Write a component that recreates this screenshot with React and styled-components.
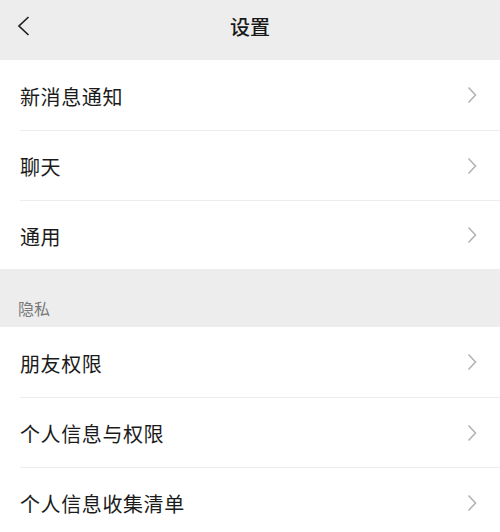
import React from "react";
import styled, { createGlobalStyle } from "styled-components";

const Global = createGlobalStyle`
  html, body { margin: 0; padding: 0; background: #ededed; }
  body { font-family: "Noto Sans CJK SC", "Noto Sans", sans-serif; }
`;

const Page = styled.div`
  width: 500px;
  height: 532px;
  overflow: hidden;
  background: #ededed;
  display: flex;
  flex-direction: column;
`;

const Header = styled.header`
  height: 60px;
  flex: none;
  display: grid;
  grid-template-columns: 60px 1fr 60px;
  align-items: center;
  background: #ededed;
`;

const Back = styled.div`
  display: flex;
  align-items: center;
  padding-left: 17px;
  padding-bottom: 8px;
  height: 100%;
  box-sizing: border-box;
`;

const Title = styled.h1`
  margin: 0;
  text-align: center;
  font-size: 20px;
  font-weight: 500;
  color: #191919;
  line-height: 1;
  padding-bottom: 6px;
`;

const Group = styled.div`
  background: #fff;
  display: flex;
  flex-direction: column;
`;

const Row = styled.div`
  height: ${(p) => p.h || 70}px;
  flex: none;
  display: flex;
  align-items: center;
  justify-content: space-between;
  padding: 0 23px 0 ${(p) => (p.first ? 20 : 0)}px;
  box-sizing: border-box;
  border-top: ${(p) => (p.first ? "none" : "1px solid #ececec")};
  margin-left: ${(p) => (p.first ? 0 : 20)}px;
`;

const Label = styled.span`
  font-size: 20px;
  color: #1b1b1b;
  letter-spacing: 0.6px;
  margin-top: ${(p) => (p.first ? 3 : 2)}px;
`;

const SectionTitle = styled.div`
  height: 58px;
  flex: none;
  box-sizing: border-box;
  padding: 26px 0 0 18px;
  font-size: 16px;
  color: #7a7a7a;
  line-height: 26px;
`;

const Chevron = () => (
  <svg width="10" height="18" viewBox="0 0 10 18">
    <path d="M1.5 1.5 L8.5 9 L1.5 16.5" fill="none" stroke="#b3b3b3" strokeWidth="1.6" />
  </svg>
);

const BackIcon = () => (
  <svg width="13" height="20" viewBox="0 0 13 20">
    <path d="M11.5 1 L2 10 L11.5 19" fill="none" stroke="#222" strokeWidth="1.7" />
  </svg>
);

const Item = ({ label, first, h }) => (
  <Row first={first} h={h}>
    <Label first={first}>{label}</Label>
    <Chevron />
  </Row>
);

export default function App() {
  return (
    <Page>
      <Global />
      <Header>
        <Back>
          <BackIcon />
        </Back>
        <Title>设置</Title>
        <div />
      </Header>
      <Group>
        <Item first label="新消息通知" h={70} />
        <Item label="聊天" h={70} />
        <Item label="通用" h={69} />
      </Group>
      <SectionTitle>隐私</SectionTitle>
      <Group>
        <Item first label="朋友权限" h={70} />
        <Item label="个人信息与权限" h={70} />
        <Item label="个人信息收集清单" h={70} />
      </Group>
    </Page>
  );
}
